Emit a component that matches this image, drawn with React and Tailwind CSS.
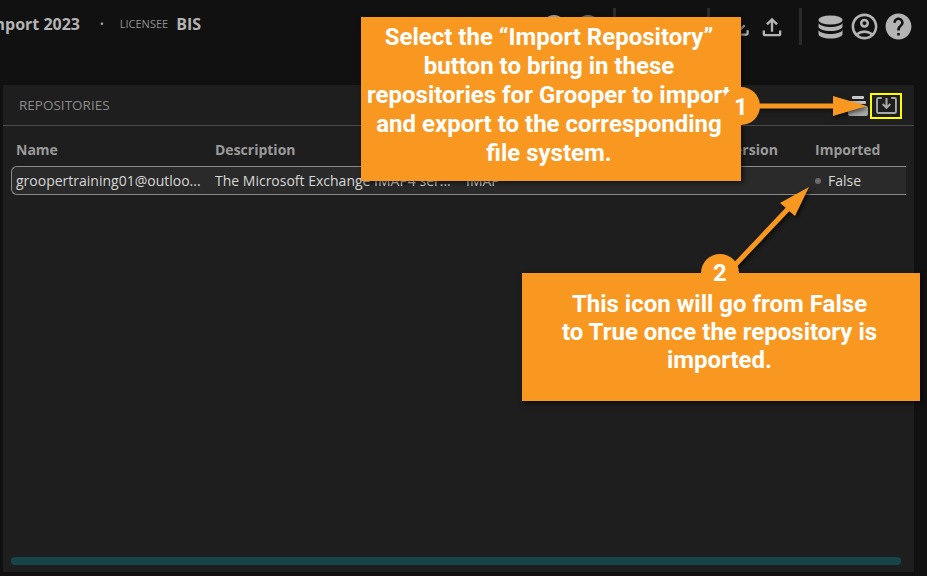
import { MdOutlineFileUpload, MdOutlineFileDownload, MdOutlineAccountCircle, MdHelp } from 'react-icons/md';

function Divider({ className }) {
  return <div className={`w-[3px] h-[37px] bg-[#2b2b2b] ${className}`} />;
}

function Header() {
  return (
    <header className="h-[85px] flex items-start bg-[#111111] text-[#b4b4b4]">
      <div className="ml-[-20px] mt-[12px] flex items-center h-[24px] whitespace-nowrap">
        <span className="text-[16px] font-bold w-[100px] text-right">Import 2023</span>
        <span className="ml-[20px] text-[10px]">•</span>
        <span className="ml-[16px] text-[11px] text-[#8f8f8f]">LICENSEE</span>
        <span className="ml-[8px] text-[16px] font-bold">BIS</span>
      </div>
      <div className="ml-auto mt-[8px] mr-[13px] flex items-center h-[37px]">
        <div className="w-[24px] h-[24px] rounded-full bg-[#a8a8a8]" />
        <div className="ml-[10px] w-[24px] h-[24px] rounded-full bg-[#6e6e6e]" />
        <Divider className="ml-[13px]" />
        <div className="ml-[20px] w-[20px] h-[20px] rounded-full border-2 border-[#a8a8a8]" />
        <div className="ml-[12px] w-[20px] h-[20px] rounded-full border-2 border-[#a8a8a8]" />
        <Divider className="ml-[19px]" />
        <MdOutlineFileDownload className="ml-[17px] text-[26px]" />
        <MdOutlineFileUpload className="ml-[5px] text-[28px]" />
        <Divider className="ml-[13px]" />
        <svg className="ml-[16px]" width="25" height="24" viewBox="0 0 25 24" fill="#b4b4b4">
          <ellipse cx="12.5" cy="5" rx="12" ry="4.5" />
          <path d="M.5 8.2c2 2.600 6.800 3.800 12 3.800s10-1.200 12-3.800v3.300c0 2.500-5.400 4.500-12 4.500s-12-2-12-4.500z" />
          <path d="M.5 15.200c2 2.600 6.800 3.800 12 3.800s10-1.200 12-3.800v3.800c0 2.500-5.400 4.500-12 4.500s-12-2-12-4.500z" />
        </svg>
        <MdOutlineAccountCircle className="ml-[6px] text-[31px]" />
        <MdHelp className="ml-[3px] text-[31px]" />
      </div>
    </header>
  );
}

function PanelActions() {
  return (
    <div className="ml-auto flex items-center">
      <svg width="20" height="20" viewBox="0 0 20 20">
        <rect x="4" y="0" width="12" height="3" rx="1" fill="#c8c8c8" />
        <rect x="2" y="5" width="16" height="3" rx="1" fill="#c8c8c8" />
        <rect x="0" y="10" width="20" height="10" rx="2" fill="#a8a8a8" />
      </svg>
      <div className="ml-[2px] w-[32px] h-[26px] border-2 border-[#ffff00] flex items-center justify-center">
        <svg width="21" height="17" viewBox="0 0 22 18" fill="none" stroke="#a8a8a8" strokeWidth="2">
          <path d="M6 1H2.500A1.500 1.500 0 0 0 1 2.500v13A1.500 1.500 0 0 0 2.500 17h17a1.500 1.500 0 0 0 1.500-1.500v-13A1.500 1.500 0 0 0 19.500 1H16" />
          <path d="M11 1v10M7 7.500l4 4 4-4" strokeWidth="2.200" />
        </svg>
      </div>
    </div>
  );
}

function RepositoryTable() {
  return (
    <div className="px-[8px] text-[14px]">
      <div className="flex h-[40px] items-end pb-[6px] pl-[5px] font-bold text-[#9a9a9a]">
        <div className="w-[199px]">Name</div>
        <div className="w-[250px]">Description</div>
        <div className="w-[260px]">Type</div>
        <div className="w-[90px]">Version</div>
        <div>Imported</div>
      </div>
      <div className="flex items-center h-[29px] pl-[4px] border border-r-0 border-[#8a8a8a] rounded-l-[6px] bg-[#2a2a2a] text-[#d6d6d6] whitespace-nowrap">
        <div className="w-[199px]">groopertraining01@outloo...</div>
        <div className="w-[251px]">The Microsoft Exchange IMAP4 ser...</div>
        <div className="w-[349px]">IMAP</div>
        <div className="flex items-center gap-[7px]">
          <span className="w-[6px] h-[6px] rounded-full bg-[#6b6b6b]" />
          False
        </div>
      </div>
    </div>
  );
}

function Annotations() {
  const callout = "absolute bg-[#f99820] text-white font-bold text-center text-[24px] whitespace-nowrap shadow-[2px_2px_5px_rgba(0,0,0,0.6)] [font-family:Roboto,sans-serif]";
  const badge = "absolute w-[38px] h-[38px] rounded-full bg-[#f99820] text-white font-bold text-[24px] text-center [font-family:Roboto,sans-serif]";
  return (
    <>
      <svg className="absolute left-0 top-0" width="927" height="576" fill="#f99820" style={{ filter: 'drop-shadow(2px 2px 2px rgba(0,0,0,.6))' }}>
        <path d="M750 103.500h83v-7.500l34 10-34 10v-7.500h-83z" />
        <path d="M733.200 263.300l52.500-55.500-5.700-4.800 29-16-14 29-5.700-4.800-52.500 55.500z" />
      </svg>
      <div className={`${callout} left-[361px] top-[17px] w-[380px] h-[164px] pt-[6px] pr-[4px] leading-[29px]`}>
        <p>Select the “Import Repository”</p>
        <p>button to bring in these</p>
        <p>repositories for Grooper to import</p>
        <p>and export to the corresponding</p>
        <p>file system.</p>
      </div>
      <div className={`${badge} left-[722px] top-[87px] leading-[40px]`}>1</div>
      <div className={`${callout} left-[522px] top-[273px] w-[398px] h-[128px] pt-[17px] pr-[3px] leading-[28px]`}>
        <p>This icon will go from False</p>
        <p>to True once the repository is</p>
        <p>imported.</p>
      </div>
      <div className={`${badge} left-[701px] top-[254px] leading-[38px]`}>2</div>
    </>
  );
}

export default function App() {
  return (
    <div className="relative w-[927px] h-[576px] overflow-hidden bg-[#111111] [font-family:'Open_Sans',sans-serif]">
      <Header />
      <main className="ml-[3px] w-[911px] h-[487px] bg-[#1e1e1e] flex flex-col">
        <div className="flex items-center h-[41px] pl-[16px] pr-[12px] pt-[1px] border-b border-[#4a4a4a] text-[13.5px] text-[#8c8c8c]">
          REPOSITORIES
          <PanelActions />
        </div>
        <RepositoryTable />
        <div className="mt-auto mb-[7px] ml-[8px] mr-[13px] h-[8px] rounded-full bg-[#164549]" />
      </main>
      <Annotations />
    </div>
  );
}
